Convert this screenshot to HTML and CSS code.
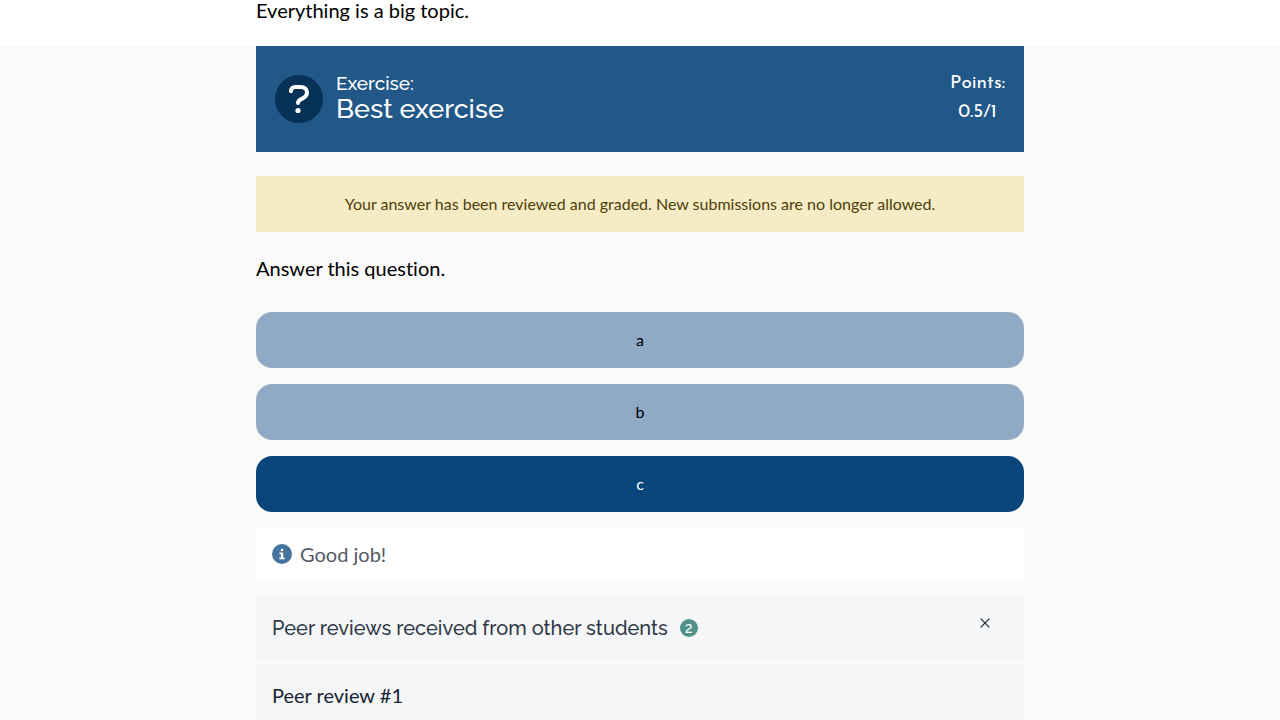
FILE: index.html
```
<!DOCTYPE html>
<html lang="en">
<head>
<meta charset="utf-8">
<meta name="viewport" content="width=device-width, initial-scale=1">
<title>Best exercise</title>
<link rel="stylesheet" href="styles.css">
</head>
<body>
<section class="intro">
  <p class="column intro-text">Everything is a big topic.</p>
</section>
<main class="column">
  <header class="exercise-header">
    <svg class="exercise-icon" viewBox="0 0 48 48" aria-hidden="true">
      <circle cx="24" cy="24" r="24" fill="#063157"/>
      <path d="M16 16.2c0-2.8 1.8-4.300 4.400-4.300h5.400c3.800 0 6.200 2.300 6.200 5.600 0 3-1.800 4.700-4.800 6.100-2.800 1.300-4.200 2.100-4.200 4.400" fill="none" stroke="#fff" stroke-width="4" stroke-linecap="round" stroke-linejoin="round"/>
      <circle cx="23" cy="35.500" r="2.600" fill="#fff"/>
    </svg>
    <h1 class="exercise-title"><span class="exercise-kind">Exercise:</span>Best exercise</h1>
    <div class="points"><span>Points:</span><span>0.5/1</span></div>
  </header>
  <p class="notice">Your answer has been reviewed and graded. New submissions are no longer allowed.</p>
  <p class="question">Answer this question.</p>
  <div class="options">
    <button class="option" type="button" disabled>a</button>
    <button class="option" type="button" disabled>b</button>
    <button class="option option-selected" type="button" disabled>c</button>
  </div>
  <div class="feedback">
    <svg class="info-icon" viewBox="0 0 20 20" aria-hidden="true">
      <circle cx="10" cy="10" r="10" fill="#44749d"/>
      <circle cx="10" cy="6" r="1.300" fill="#fff"/>
      <path d="M7.500 8.500h3.700v5h1.500v1.700H7.300v-1.700h1.600v-3.300H7.500z" fill="#fff"/>
    </svg>
    <p class="feedback-text">Good job!</p>
  </div>
  <section class="reviews">
    <div class="reviews-header">
      <h2 class="reviews-title">Peer reviews received from other students</h2>
      <span class="badge">2</span>
      <button class="close" type="button" aria-label="Close">
        <svg class="close-icon" viewBox="0 0 10 10" aria-hidden="true"><path d="M.7.7l8.600 8.600M9.300.7L.7 9.300" fill="none" stroke="#1a2333" stroke-width="1.200"/></svg>
      </button>
    </div>
    <article class="review"><h3 class="review-title">Peer review #1</h3></article>
  </section>
</main>
</body>
</html>
```
FILE: styles.css
```
* {
  box-sizing: border-box;
}

body {
  margin: 0;
  background: #fafafa;
  color: #000;
  font-family: Lato, sans-serif;
  font-size: 20px;
  font-variant-ligatures: none;
  line-height: 32px;
}

h1, h2, h3, p {
  margin: 0;
  font-weight: 400;
}

.intro {
  background: #fff;
  padding-bottom: 26px;
}

.column {
  width: 60%;
  margin: 0 auto;
}

.intro-text {
  line-height: 20px;
}

.exercise-header {
  display: flex;
  align-items: flex-start;
  padding: 23px 19px 25px 18px;
  background: #215887;
  color: #fff;
}

.exercise-icon {
  width: 48px;
  height: 48px;
  margin: 6px 13px 0 1px;
}

.exercise-title {
  flex: 1;
  font-family: Raleway, Inter, sans-serif;
  font-size: 27px;
  font-weight: 500;
  line-height: 27px;
  padding-top: 2px;
}

.exercise-kind {
  display: block;
  font-size: 19px;
  line-height: 24px;
}

.points {
  display: flex;
  flex-direction: column;
  align-items: center;
  font-family: "Josefin Sans", Lato, sans-serif;
  font-size: 19px;
  line-height: 29px;
}

.notice {
  margin-top: 24px;
  padding: 12px 16px;
  background: #f5ebc5;
  color: #4f4008;
  font-size: 16px;
  text-align: center;
}

.question {
  margin-top: 20px;
}

.options {
  display: grid;
  gap: 16px;
  margin-top: 28px;
}

.option {
  height: 56px;
  padding: 0 16px 2px;
  border: 0;
  border-radius: 16px;
  background: #90a9c4;
  color: #000;
  font-family: Lato, sans-serif;
  font-size: 16px;
}

.option-selected {
  background: #08457a;
  color: #fff;
}

.feedback {
  display: flex;
  align-items: center;
  gap: 8px;
  margin-top: 15px;
  padding: 11px 16px;
  background: #fff;
  color: #535a66;
}

.info-icon {
  width: 20px;
  height: 20px;
}

.reviews {
  margin-top: 16px;
}

.reviews-header {
  display: flex;
  align-items: center;
  padding: 15px 32px 15px 16px;
  background: #f4f6f8;
  color: #313947;
}

.reviews-title {
  font-family: Raleway, Inter, sans-serif;
  font-size: 20px;
  font-weight: 500;
}

.badge {
  width: 18px;
  height: 18px;
  margin-left: 12px;
  border-radius: 50%;
  background: #52928a;
  color: #fff;
  font-family: Raleway, Inter, sans-serif;
  font-size: 14px;
  font-weight: 500;
  line-height: 18px;
  text-align: center;
}

.close {
  display: flex;
  margin: 0 0 10px auto;
  padding: 2px;
  border: 0;
  background: none;
}

.close-icon {
  width: 10px;
  height: 10px;
}

.review {
  margin-top: 5px;
  padding: 15px 16px;
  background: #f4f6f8;
}

.review-title {
  color: #1a2333;
  font-size: 20px;
}
```
